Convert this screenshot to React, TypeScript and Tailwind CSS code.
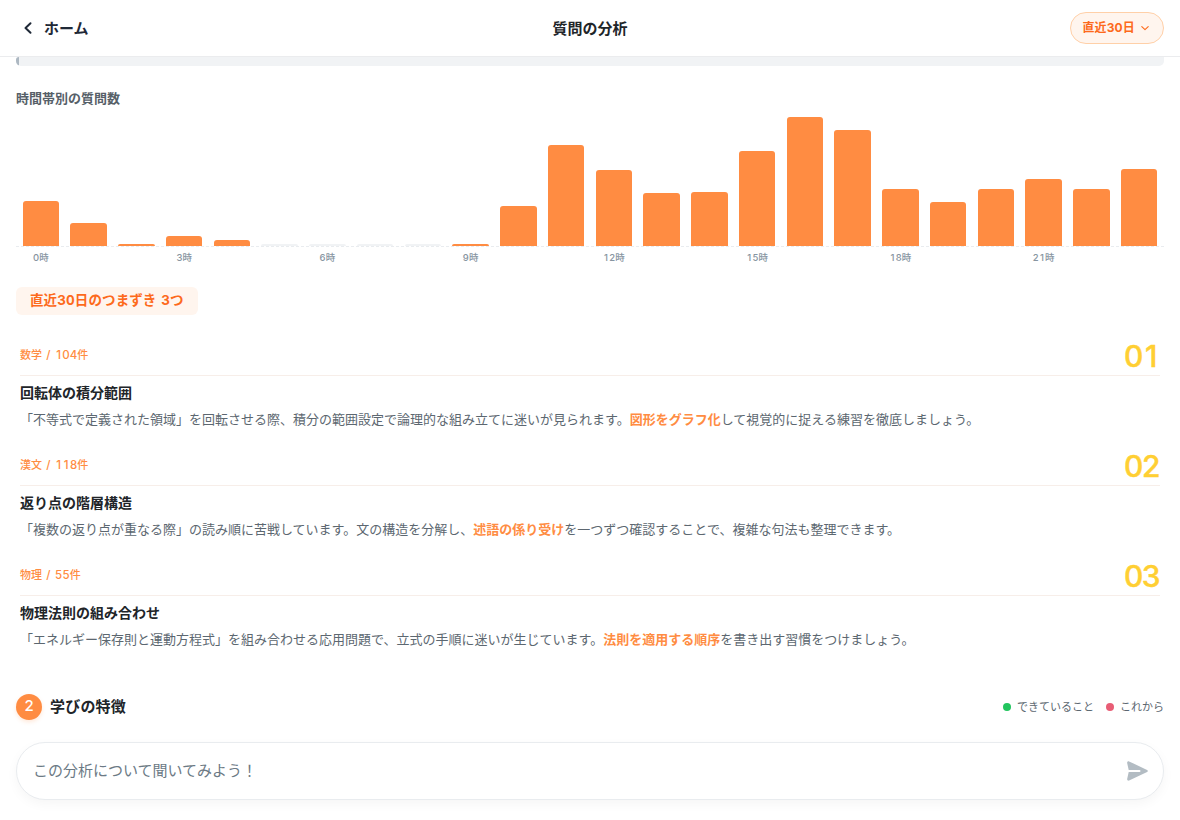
const bars = [45, 23, 2, 10, 6, 0, 0, 0, 0, 2, 40, 101, 76, 53, 54, 95, 129, 116, 57, 44, 57, 67, 57, 77];

const stumbles = [
  {
    subject: '数学', count: '104', no: '01', title: '回転体の積分範囲',
    before: '「不等式で定義された領域」を回転させる際、積分の範囲設定で論理的な組み立てに迷いが見られます。',
    mark: '図形をグラフ化', after: 'して視覚的に捉える練習を徹底しましょう。',
  },
  {
    subject: '漢文', count: '118', no: '02', title: '返り点の階層構造',
    before: '「複数の返り点が重なる際」の読み順に苦戦しています。文の構造を分解し、',
    mark: '述語の係り受け', after: 'を一つずつ確認することで、複雑な句法も整理できます。',
  },
  {
    subject: '物理', count: '55', no: '03', title: '物理法則の組み合わせ',
    before: '「エネルギー保存則と運動方程式」を組み合わせる応用問題で、立式の手順に迷いが生じています。',
    mark: '法則を適用する順序', after: 'を書き出す習慣をつけましょう。',
  },
];

// Sets every digit in a cell of equal width, keeping the plain form of "1".
function Digits({ value, cell }: { value: string; cell: string }) {
  return (
    <>
      {value.split('').map((d, i) => (
        <span key={i} className={`inline-flex justify-center ${cell}`}>{d}</span>
      ))}
    </>
  );
}

function Header() {
  return (
    <header className="grid h-[57px] shrink-0 grid-cols-3 items-center border-b border-[#ebecee] bg-white px-4">
      <button className="flex items-center gap-2 pl-1 text-[15px] font-bold text-[#1f2937]">
        <svg className="h-4 w-4" viewBox="0 0 16 16" fill="none" stroke="currentColor" strokeWidth="2" strokeLinecap="round" strokeLinejoin="round">
          <path d="M10.500 3.200 5.500 8l5 4.800" />
        </svg>
        <span className="pt-[2px]">ホーム</span>
      </button>
      <h1 className="pt-[2px] text-center text-[15px] font-bold text-[#212529]">質問の分析</h1>
      <button className="flex h-8 items-center gap-1 justify-self-end rounded-full border border-[#ffd0a8] bg-[#fff5ee] px-3 text-[12px] font-bold text-[#fd6a1c]">
        <span className="-ml-px tracking-[0.15px]">直近30日</span>
        <svg className="h-3 w-3" viewBox="0 0 12 12" fill="none" stroke="currentColor" strokeWidth="1.1" strokeLinecap="round" strokeLinejoin="round">
          <path d="m2.800 4.700 3.200 3 3.200-3" />
        </svg>
      </button>
    </header>
  );
}

function Chart() {
  return (
    <section>
      <h2 className="mt-[22px] text-[13px] leading-5 font-semibold text-[#566068]">時間帯別の質問数</h2>
      <div className="mt-[8px] flex h-[131px] items-end border-b border-dashed border-[#e9ecef] px-px">
        {bars.map((h, i) => (
          <div key={i} className="flex flex-1 justify-center">
            <div
              className={h ? 'w-[76%] rounded-t-[3px] bg-[#ff8c42]' : 'w-[76%] rounded-t-[2px] bg-[#f1f3f5]'}
              style={{ height: h || 2 }}
            />
          </div>
        ))}
      </div>
      <div className="mt-[3px] flex h-4 px-px text-[9.5px] leading-4 font-medium text-[#8795a1]">
        {bars.map((_, i) => (
          <span key={i} className="flex flex-1 justify-center whitespace-nowrap">
            {i % 3 === 0 && <><Digits value={String(i)} cell="w-[6.2px]" />時</>}
          </span>
        ))}
      </div>
    </section>
  );
}

export default function App() {
  return (
    <div className="flex h-[820px] flex-col overflow-hidden bg-white font-[Inter,'Noto_Sans_CJK_JP',sans-serif]">
      <Header />
      <main className="flex flex-1 flex-col px-4">
        <div className="h-[9px] overflow-hidden rounded-tl-[3px] rounded-b-[5px] bg-[#f1f3f5]">
          <div className="h-full w-[3px] bg-[#adb8c2]" />
        </div>
        <Chart />
        <div className="mt-[21px] flex h-7 w-[182px] items-center rounded-md bg-[#fff5ee] pb-[2px] pl-[14px] text-[13.5px] font-bold tracking-[0.1px] whitespace-nowrap text-[#fd6a1c] tabular-nums [word-spacing:1px]">
          直近30日のつまずき 3つ
        </div>
        <div className="mt-[21px] px-1">
          {stumbles.map((s) => (
            <article key={s.no} className="h-[110px]">
              <div className="flex h-10 items-center justify-between border-b border-[#f7eee9]">
                <span className="text-[11px] font-medium whitespace-pre text-[#ff8c42]">
                  {s.subject}
                  <span className="text-[11.5px] [word-spacing:1.2px]">{' / '}<Digits value={s.count} cell="w-[7.5px]" /></span>
                  件
                </span>
                <span className="text-[30px] leading-10 font-medium text-[#ffcf33] [-webkit-text-stroke:0.4px_#ffcf33]"><Digits value={s.no} cell="w-[17.6px]" /></span>
              </div>
              <h3 className="mt-[7px] text-[14px] leading-5 font-bold text-[#212529]">{s.title}</h3>
              <p className="mt-[6px] text-[13px] leading-5 whitespace-nowrap text-[#5c6770]">
                {s.before}<strong className="font-bold text-[#ff8c42]">{s.mark}</strong>{s.after}
              </p>
            </article>
          ))}
        </div>
        <div className="mt-[28px] flex h-[26px] items-center">
          <span className="flex h-[26px] w-[26px] items-center justify-center rounded-full bg-[#ff8c42] pb-px text-[15px] font-medium text-white shadow-[0_2px_4px_rgba(255,140,66,0.2)]">2</span>
          <h2 className="ml-2 text-[15px] font-bold tracking-[0.2px] text-[#212529]">学びの特徴</h2>
          <div className="ml-auto flex items-center gap-[12px] text-[11px] text-[#5c6770]">
            <span className="flex items-center gap-[6px]"><i className="h-2 w-2 rounded-full bg-[#22c55e]" />できていること</span>
            <span className="flex items-center gap-[6px]"><i className="h-2 w-2 rounded-full bg-[#e85d75]" />これから</span>
          </div>
        </div>
        <div className="mt-[22px] flex h-[58px] items-center justify-between rounded-full border border-[#e9ecef] bg-white pr-[14px] pl-[16px] shadow-[0_4px_12px_rgba(0,0,0,0.04)]">
          <span className="pt-px text-[15px] text-[#6c7a85]">この分析について聞いてみよう！</span>
          <svg className="h-6 w-6" viewBox="0 0 24 24" fill="#b3bcc3">
            <path d="M2.200 4.200c-.3-1.500.8-2.300 1.900-1.800l18 8.500c1 .5 1 1.700 0 2.200L4.100 21.600c-1.100.5-2.200-.3-1.900-1.800L3.700 13H14.500a1 1 0 0 0 0-2H3.700z" />
          </svg>
        </div>
      </main>
    </div>
  );
}
